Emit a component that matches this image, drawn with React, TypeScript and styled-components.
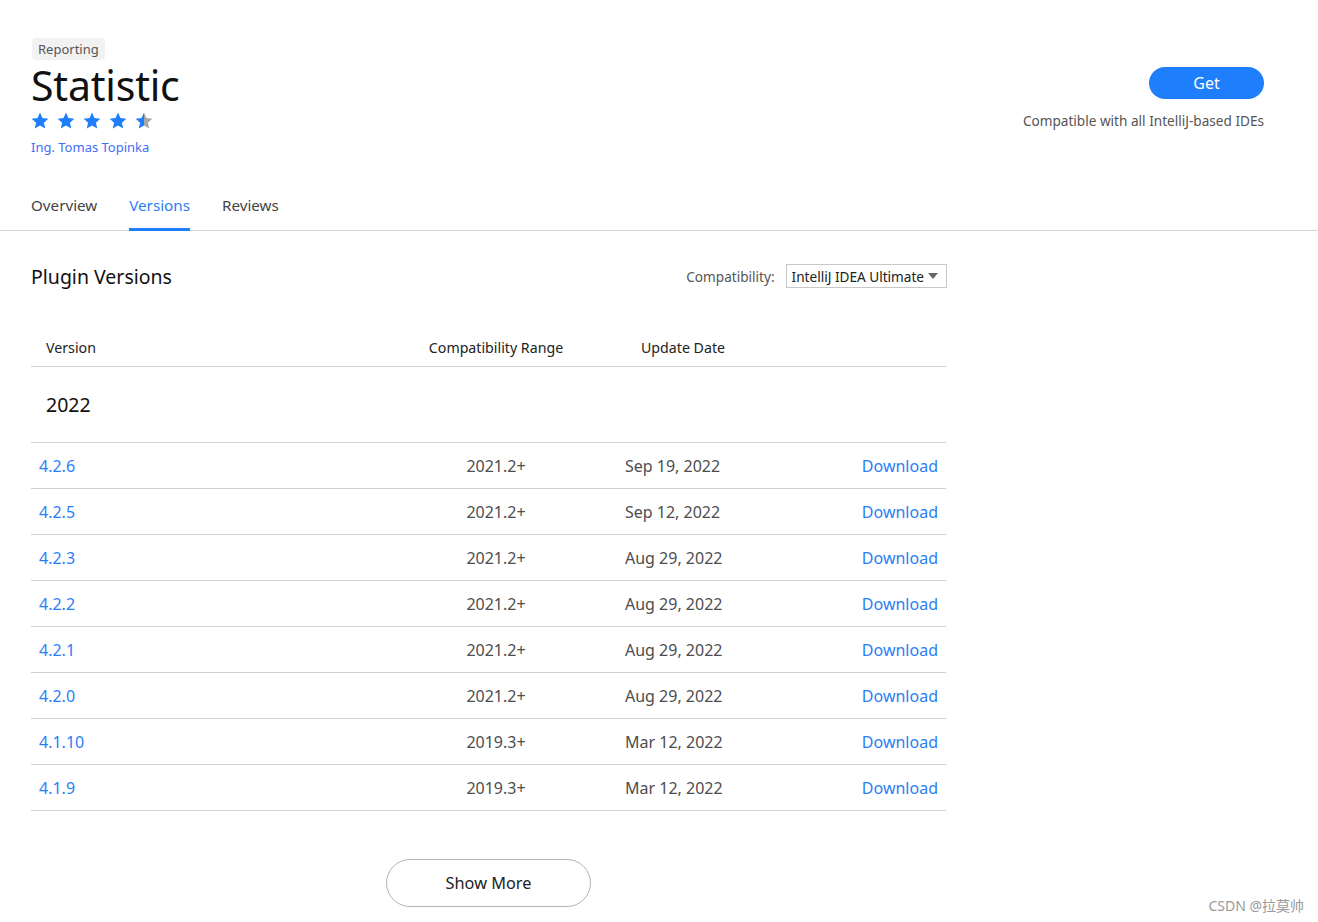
import React from 'react';
import styled, { createGlobalStyle } from 'styled-components';

const GlobalStyle = createGlobalStyle`
    html, body {
        margin: 0;
        padding: 0;
        background: #ffffff;
        font-family: 'Noto Sans', 'Open Sans', 'Noto Sans CJK SC', sans-serif;
        color: #1a1a1a;
    }
`;

const BLUE = '#1f7efb';
const LINK = '#2a7ef7';

const Page = styled.div`
    position: relative;
    width: 1318px;
    min-height: 922px;
`;

const Header = styled.header`
    display: flex;
    justify-content: space-between;
    padding: 38px 54px 0 31px;
`;

const Info = styled.div`
    display: flex;
    flex-direction: column;
    align-items: flex-start;
`;

const Tag = styled.span`
    display: inline-block;
    background: #f2f2f2;
    border-radius: 4px;
    padding: 0 6px;
    margin-left: 1px;
    font-size: 13px;
    line-height: 22px;
    color: #555;
`;

const Title = styled.h1`
    margin: 1px 0 0;
    font-size: 41px;
    line-height: 48px;
    font-weight: 400;
    color: #111;
    letter-spacing: -0.2px;
`;

const Stars = styled.div`
    display: flex;
    gap: 8px;
    margin-top: 2px;
    height: 18px;
    align-items: center;
`;

const Author = styled.a`
    margin-top: 8px;
    font-size: 13px;
    line-height: 20px;
    color: #3f6ff3;
    text-decoration: none;
`;

const Actions = styled.div`
    display: flex;
    flex-direction: column;
    align-items: flex-end;
    padding-top: 29px;
`;

const GetButton = styled.button`
    width: 115px;
    height: 32px;
    border: none;
    border-radius: 16px;
    background: ${BLUE};
    color: #fff;
    font-family: inherit;
    font-size: 16px;
    cursor: pointer;
`;

const Compat = styled.div`
    margin-top: 13px;
    font-size: 13.6px;
    line-height: 18px;
    color: #555;
`;

const TabBar = styled.nav`
    display: flex;
    gap: 32px;
    margin-top: 38px;
    padding: 0 31px;
    border-bottom: 1px solid #d3d3d3;
`;

const Tab = styled.a<{ $active?: boolean }>`
    font-size: 15.2px;
    line-height: 20px;
    padding-bottom: 13px;
    margin-bottom: -1px;
    color: ${(p) => (p.$active ? LINK : '#444')};
    border-bottom: 3px solid ${(p) => (p.$active ? BLUE : 'transparent')};
    cursor: pointer;
`;

const Section = styled.section`
    width: 916px;
    padding: 32px 0 0 31px;
`;

const SectionHead = styled.div`
    display: flex;
    justify-content: space-between;
    align-items: center;
    height: 26px;
`;

const SectionTitle = styled.h2`
    margin: 0;
    font-size: 19.5px;
    font-weight: 400;
    color: #111;
`;

const Filter = styled.div`
    display: flex;
    align-items: center;
    gap: 11px;
    font-size: 13.6px;
    color: #555;
`;

const Select = styled.div`
    display: flex;
    align-items: center;
    gap: 4px;
    height: 22px;
    padding: 0 8px 0 5px;
    border: 1px solid #c8c8c8;
    font-size: 13.6px;
    color: #222;
`;

const Table = styled.div`
    width: 915px;
    margin-top: 39px;
`;

const Row = styled.div<{ $head?: boolean }>`
    display: grid;
    grid-template-columns: 375px 180px 180px 1fr;
    align-items: center;
    height: ${(p) => (p.$head ? '38px' : '45px')};
    border-bottom: 1px solid #d0d0d0;
    font-size: ${(p) => (p.$head ? '14.2px' : '16px')};
`;

const GroupRow = styled.div`
    height: 75px;
    display: flex;
    align-items: center;
    padding-left: 15px;
    font-size: 19.5px;
    color: #111;
    border-bottom: 1px solid #d0d0d0;
`;

const Cell = styled.div<{ $align?: 'left' | 'center' | 'right'; $pad?: string; $color?: string }>`
    text-align: ${(p) => p.$align || 'left'};
    padding: ${(p) => p.$pad || '0'};
    color: ${(p) => p.$color || '#4d4d4d'};
    white-space: nowrap;
`;

const Footer = styled.div`
    display: flex;
    justify-content: center;
    width: 915px;
    margin-top: 48px;
`;

const MoreButton = styled.button`
    width: 205px;
    height: 48px;
    border: 1px solid #b4b4b4;
    border-radius: 24px;
    background: #fff;
    font-family: inherit;
    font-size: 16.3px;
    color: #222;
    cursor: pointer;
`;

const Watermark = styled.div`
    position: absolute;
    right: 14px;
    bottom: 7px;
    font-size: 14px;
    color: #9a9a9a;
`;

const Star = ({ fill = 1 }: { fill?: number }) => {
    const id = `half-${fill}`;
    return (
        <svg width="18" height="17" viewBox="0 0 24 23">
            <defs>
                <linearGradient id={id}>
                    <stop offset={fill} stopColor={BLUE} />
                    <stop offset={fill} stopColor="#a8a8a8" />
                </linearGradient>
            </defs>
            <path
                d="M12 0.8l3.3 7.4 8 0.8-6 5.4 1.8 7.9L12 18.2l-7.1 4.1 1.8-7.9-6-5.4 8-0.8z"
                fill={`url(#${id})`}
            />
        </svg>
    );
};

const versions = [
    { v: '4.2.6', range: '2021.2+', date: 'Sep 19, 2022' },
    { v: '4.2.5', range: '2021.2+', date: 'Sep 12, 2022' },
    { v: '4.2.3', range: '2021.2+', date: 'Aug 29, 2022' },
    { v: '4.2.2', range: '2021.2+', date: 'Aug 29, 2022' },
    { v: '4.2.1', range: '2021.2+', date: 'Aug 29, 2022' },
    { v: '4.2.0', range: '2021.2+', date: 'Aug 29, 2022' },
    { v: '4.1.10', range: '2019.3+', date: 'Mar 12, 2022' },
    { v: '4.1.9', range: '2019.3+', date: 'Mar 12, 2022' },
];

const App = () => {
    return (
        <Page>
            <GlobalStyle />
            <Header>
                <Info>
                    <Tag>Reporting</Tag>
                    <Title>Statistic</Title>
                    <Stars>
                        <Star />
                        <Star />
                        <Star />
                        <Star />
                        <Star fill={0.5} />
                    </Stars>
                    <Author>Ing. Tomas Topinka</Author>
                </Info>
                <Actions>
                    <GetButton>Get</GetButton>
                    <Compat>Compatible with all IntelliJ-based IDEs</Compat>
                </Actions>
            </Header>

            <TabBar>
                <Tab>Overview</Tab>
                <Tab $active>Versions</Tab>
                <Tab>Reviews</Tab>
            </TabBar>

            <Section>
                <SectionHead>
                    <SectionTitle>Plugin Versions</SectionTitle>
                    <Filter>
                        Compatibility:
                        <Select>
                            IntelliJ IDEA Ultimate
                            <svg width="10" height="6" viewBox="0 0 10 6">
                                <path d="M0 0h10L5 6z" fill="#666" />
                            </svg>
                        </Select>
                    </Filter>
                </SectionHead>

                <Table>
                    <Row $head>
                        <Cell $pad="0 0 0 15px" $color="#222">Version</Cell>
                        <Cell $align="center" $color="#222">Compatibility Range</Cell>
                        <Cell $pad="0 0 0 55px" $color="#222">Update Date</Cell>
                        <Cell />
                    </Row>
                    <GroupRow>2022</GroupRow>
                    {versions.map((row) => (
                        <Row key={row.v}>
                            <Cell $pad="0 0 0 8px" $color={LINK}>{row.v}</Cell>
                            <Cell $align="center">{row.range}</Cell>
                            <Cell $pad="0 0 0 39px">{row.date}</Cell>
                            <Cell $align="right" $pad="0 8px 0 0" $color={LINK}>Download</Cell>
                        </Row>
                    ))}
                </Table>

                <Footer>
                    <MoreButton>Show More</MoreButton>
                </Footer>
            </Section>

            <Watermark>CSDN @拉莫帅</Watermark>
        </Page>
    );
};

export default App;
